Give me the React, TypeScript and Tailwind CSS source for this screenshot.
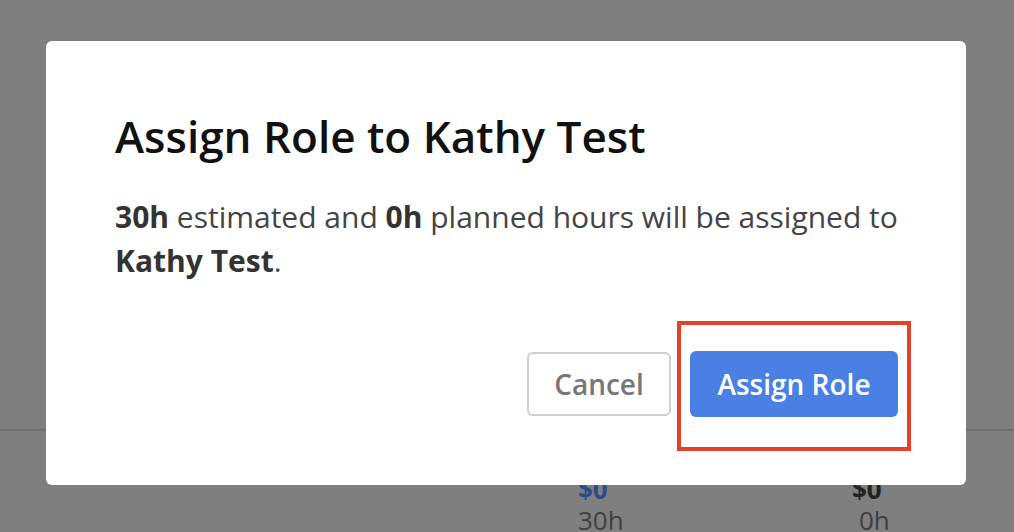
export default function App() {
  return (
    <div
      className="relative h-[532px] w-[1014px] overflow-hidden bg-[#7f7f7f]"
      style={{ fontFamily: '"Open Sans", "Liberation Sans", sans-serif' }}
    >
      {/* page behind the overlay */}
      <div className="h-[429px]" />
      <div className="h-[2px] bg-[#6f6f6f]" />
      <div className="flex pt-[43px]">
        <div className="ml-[578px] flex w-[120px] flex-col text-[26px] leading-[31px]">
          <span className="font-bold text-[#2a4c8c]">$0</span>
          <span className="text-[#3f3f3f]">30h</span>
        </div>
        <div className="ml-[154px] flex w-[60px] flex-col text-[26px] leading-[31px]">
          <span className="font-bold text-[#222]">$0</span>
          <span className="pl-[7px] text-[#3f3f3f]">0h</span>
        </div>
      </div>

      {/* modal */}
      <div className="absolute left-[46px] top-[41px] flex h-[444px] w-[920px] flex-col rounded-[6px] bg-white pl-[69px] pr-[68px] pt-[67px]">
        <h2 className="text-[44px] font-semibold leading-[56px] text-[#111]">Assign Role to Kathy Test</h2>
        <p className="mt-[31px] text-[30px] leading-[44px] text-[#444]">
          <b className="font-bold text-[#333]">30h</b> estimated and <b className="font-bold text-[#333]">0h</b> planned
          hours will be assigned to <b className="font-bold text-[#333]">Kathy Test</b>.
        </p>
        <div className="mt-auto mb-[68px] flex items-center justify-end gap-[19px]">
          <button className="h-[64px] w-[144px] rounded-[6px] border-2 border-[#cfcfcf] bg-white text-[28px] font-semibold text-[#777]">
            Cancel
          </button>
          <button className="h-[66px] w-[208px] rounded-[6px] bg-[#4a80e4] text-[28px] font-semibold text-white">
            Assign Role
          </button>
        </div>
      </div>

      {/* highlight */}
      <div className="absolute left-[677px] top-[321px] h-[130px] w-[234px] border-4 border-[#e5412a]" />
    </div>
  );
}
